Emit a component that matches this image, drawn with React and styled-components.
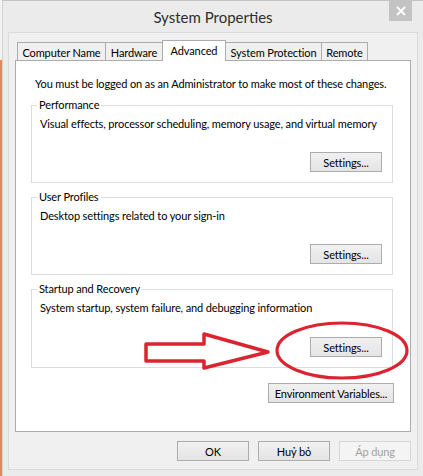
import React from "react";
import styled, { createGlobalStyle } from "styled-components";

const GlobalStyle = createGlobalStyle`
  *, *::before, *::after { box-sizing: border-box; }
  html, body { margin: 0; padding: 0; background: #ffffff; }
  body {
    font-family: Lato, "Noto Sans", sans-serif;
    font-size: 11px;
    letter-spacing: -0.12px;
    color: #000;
  }
  #root { width: 423px; height: 476px; overflow: hidden; }
`;

const Screen = styled.div`
  position: relative;
  display: flex;
  width: 423px;
  height: 476px;
  overflow: hidden;
`;

/* sliver of the desktop visible to the left of the window */
const DesktopEdge = styled.div`
  flex: 0 0 2px;
  background: linear-gradient(to bottom, #f2f2f2 0 60px, #e9865d 60px);
`;

const Window = styled.div`
  flex: 1;
  min-width: 0;
  display: flex;
  flex-direction: column;
  background: #ebebeb;
  border-left: 1px solid #d2d2d2;
  border-top: 1px solid #c4c4c4;
  padding: 0 5px 6px 5px;
`;

const TitleBar = styled.div`
  position: relative;
  flex: 0 0 31px;
  display: flex;
  align-items: center;
  justify-content: center;
`;

const Title = styled.div`
  font-size: 15px;
  color: #2e2e2e;
  letter-spacing: 0;
`;

const CloseButton = styled.div`
  position: absolute;
  top: -1px;
  right: 6px;
  width: 23px;
  height: 21px;
  background: #c3c3c3;
  display: flex;
  align-items: center;
  justify-content: center;
`;

const Client = styled.div`
  flex: 0 0 438px;
  min-width: 0;
  display: flex;
  flex-direction: column;
  background: #f0f0f0;
  border: 1px solid #dadada;
  padding: 7px 6px 0 6px;
`;

const TabStrip = styled.div`
  position: relative;
  z-index: 1;
  display: flex;
  align-items: flex-end;
  padding-left: 2px;
  margin-bottom: -1px;
`;

const Tab = styled.div`
  position: relative;
  flex: 0 0 auto;
  width: ${(p) => p.$w}px;
  height: ${(p) => (p.$active ? 21 : 19)}px;
  margin-left: -1px;
  &:first-child { margin-left: 0; }
  border: 1px solid #acacac;
  border-bottom: ${(p) => (p.$active ? "none" : "1px solid #acacac")};
  background: ${(p) => (p.$active ? "#ffffff" : "#f0f0f0")};
  z-index: ${(p) => (p.$active ? 2 : 1)};
  display: flex;
  align-items: ${(p) => (p.$active ? "flex-start" : "center")};
  padding-top: ${(p) => (p.$active ? "2px" : "1px")};
  justify-content: center;
  line-height: 15px;
  white-space: nowrap;
`;

const Panel = styled.div`
  flex: 0 0 372px;
  min-width: 0;
  display: flex;
  flex-direction: column;
  background: #ffffff;
  border: 1px solid #acacac;
  padding: 15px 17px 0 15px;
`;

const Notice = styled.div`
  line-height: 15px;
  margin-left: 4px;
  white-space: nowrap;
`;

const Groups = styled.div`
  display: flex;
  flex-direction: column;
  gap: 14px;
  margin-top: 14px;
`;

const Group = styled.div`
  position: relative;
  height: ${(p) => p.$h || 78}px;
  display: flex;
  flex-direction: column;
  border: 1px solid #dcdcdc;
  padding: 10px 10px 10px 8px;
`;

const Legend = styled.div`
  position: absolute;
  top: -8px;
  left: 5px;
  padding: 0 2px;
  background: #ffffff;
  line-height: 14px;
  white-space: nowrap;
`;

const Description = styled.div`
  line-height: 15px;
  white-space: nowrap;
`;

const Button = styled.div`
  flex: 0 0 auto;
  width: ${(p) => p.$w || 72}px;
  height: 20px;
  display: flex;
  align-items: center;
  justify-content: center;
  border: 1px solid ${(p) => (p.$disabled ? "#d6d6d6" : "#acacac")};
  background: ${(p) =>
    p.$disabled ? "#f4f4f4" : "linear-gradient(to bottom, #f1f1f1, #e4e4e4)"};
  color: ${(p) => (p.$disabled ? "#a2a2a2" : "#000")};
  white-space: nowrap;
  line-height: 15px;
`;

const GroupButton = styled(Button)`
  margin-top: auto;
  align-self: flex-end;
`;

const EnvButton = styled(Button)`
  align-self: flex-end;
  margin-top: 15px;
  margin-right: -1px;
`;

const DialogButtons = styled.div`
  display: flex;
  justify-content: flex-end;
  gap: 9px;
  margin-top: 9px;
`;

const Annotation = styled.svg`
  position: absolute;
  left: 0;
  top: 0;
  pointer-events: none;
`;

const tabs = [
  { label: "Computer Name", w: 89 },
  { label: "Hardware", w: 58 },
  { label: "Advanced", w: 64, active: true },
  { label: "System Protection", w: 97 },
  { label: "Remote", w: 47 },
];

const groups = [
  {
    title: "Performance",
    text: "Visual effects, processor scheduling, memory usage, and virtual memory",
  },
  { title: "User Profiles", text: "Desktop settings related to your sign-in" },
  {
    title: "Startup and Recovery",
    text: "System startup, system failure, and debugging information",
    h: 79,
  },
];

export default function App() {
  return (
    <>
      <GlobalStyle />
      <Screen>
        <DesktopEdge />
        <Window>
          <TitleBar>
            <Title>System Properties</Title>
            <CloseButton>
              <svg width="10" height="10" viewBox="0 0 10 10">
                <path d="M1 1 L9 9 M9 1 L1 9" stroke="#ffffff" strokeWidth="1.8" />
              </svg>
            </CloseButton>
          </TitleBar>
          <Client>
            <TabStrip>
              {tabs.map((t) => (
                <Tab key={t.label} $w={t.w} $active={t.active}>
                  {t.label}
                </Tab>
              ))}
            </TabStrip>
            <Panel>
              <Notice>
                You must be logged on as an Administrator to make most of these changes.
              </Notice>
              <Groups>
                {groups.map((g) => (
                  <Group key={g.title} $h={g.h}>
                    <Legend>{g.title}</Legend>
                    <Description>{g.text}</Description>
                    <GroupButton>Settings...</GroupButton>
                  </Group>
                ))}
              </Groups>
              <EnvButton $w={126}>Environment Variables...</EnvButton>
            </Panel>
            <DialogButtons>
              <Button>OK</Button>
              <Button>Huỷ bỏ</Button>
              <Button $disabled>Áp dụng</Button>
            </DialogButtons>
          </Client>
        </Window>
        <Annotation width="423" height="476" viewBox="0 0 423 476">
          <polygon
            points="146,344 204,344 204,334 268,352 204,368 204,361 146,361"
            fill="none"
            stroke="#dc2430"
            strokeWidth="3.5"
            strokeLinejoin="round"
          />
          <ellipse
            cx="342"
            cy="350.5"
            rx="65"
            ry="27.5"
            fill="none"
            stroke="#dc2430"
            strokeWidth="3.2"
          />
        </Annotation>
      </Screen>
    </>
  );
}
